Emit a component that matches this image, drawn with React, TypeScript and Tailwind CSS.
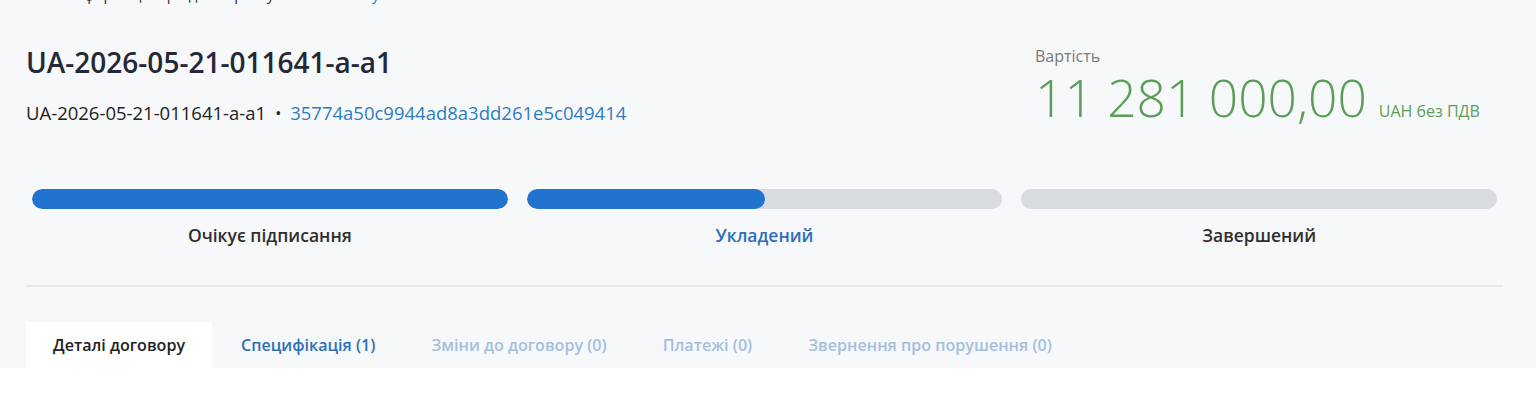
import React from 'react';

const font = { fontFamily: '"Open Sans", "Noto Sans", sans-serif' };

const stages = [
    { label: 'Очікує підписання', fill: 100, active: false },
    { label: 'Укладений', fill: 50, active: true },
    { label: 'Завершений', fill: 0, active: false },
];

const tabs = [
    { label: 'Деталі договору', state: 'current' },
    { label: 'Специфікація (1)', state: 'link' },
    { label: 'Зміни до договору (0)', state: 'muted' },
    { label: 'Платежі (0)', state: 'muted' },
    { label: 'Звернення про порушення (0)', state: 'muted' },
];

export default function App() {
    return (
        <div className="w-[1536px] h-[420px] overflow-hidden bg-white" style={font}>
            <div className="bg-[#f7f8f9] px-[26px] pr-[33px]">
                {/* обрізаний рядок зверху */}
                <div className="h-[6px] overflow-hidden">
                    <p className="-mt-[16px] pl-[44px] text-[15px] leading-[20px] text-[#333]">
                        Інформація про договір та умови оплати <span className="text-[#2e7cc4]">у</span>
                    </p>
                </div>

                {/* заголовок і вартість */}
                <div className="flex justify-between pt-[38px]">
                    <div>
                        <h1 className="text-[28px] leading-[36px] font-semibold text-[#252836]">UA-2026-05-21-011641-a-a1</h1>
                        <div className="mt-[20px] flex items-center text-[18.5px] leading-[26px] text-[#222]">
                            <span>UA-2026-05-21-011641-a-a1</span>
                            <span className="mx-[9px] text-[16px]">•</span>
                            <span className="text-[#2e7cc4]">35774a50c9944ad8a3dd261e5c049414</span>
                        </div>
                    </div>
                    <div className="w-[468px] pt-[2px]">
                        <div className="text-[16px] leading-[21px] text-[#7a7a7a]">Вартість</div>
                        <div className="flex items-baseline text-[#5b9e58]">
                            <span className="text-[51.5px] leading-[60px] font-light">11 281 000,00</span>
                            <span className="ml-[12px] text-[16px]">UAH без ПДВ</span>
                        </div>
                    </div>
                </div>

                {/* етапи */}
                <div className="mt-[62px] flex gap-[19px] px-[6px]">
                    {stages.map((s) => (
                        <div key={s.label} className="flex-1 flex flex-col items-center">
                            <div className="w-full h-[20px] rounded-full bg-[#d8dbe0] overflow-hidden">
                                <div className="h-full rounded-full bg-[#2272d0]" style={{ width: `${s.fill}%` }} />
                            </div>
                            <div className={`mt-[14px] text-[17.5px] leading-[24px] font-semibold ${s.active ? 'text-[#2d6fb8]' : 'text-[#2f2f2f]'}`}>
                                {s.label}
                            </div>
                        </div>
                    ))}
                </div>

                <div className="mt-[38px] h-[2px] bg-[#e6e8eb]" />

                {/* вкладки */}
                <div className="mt-[35px] flex gap-[2px]">
                    {tabs.map((t) => (
                        <div
                            key={t.label}
                            className={`h-[46px] px-[27px] flex items-center text-[16.1px] font-semibold ${
                                t.state === 'current'
                                    ? 'bg-white text-[#222]'
                                    : t.state === 'link'
                                    ? 'text-[#2d6fb8]'
                                    : 'text-[#a3bfe0]'
                            }`}
                        >
                            {t.label}
                        </div>
                    ))}
                </div>
            </div>
        </div>
    );
}
